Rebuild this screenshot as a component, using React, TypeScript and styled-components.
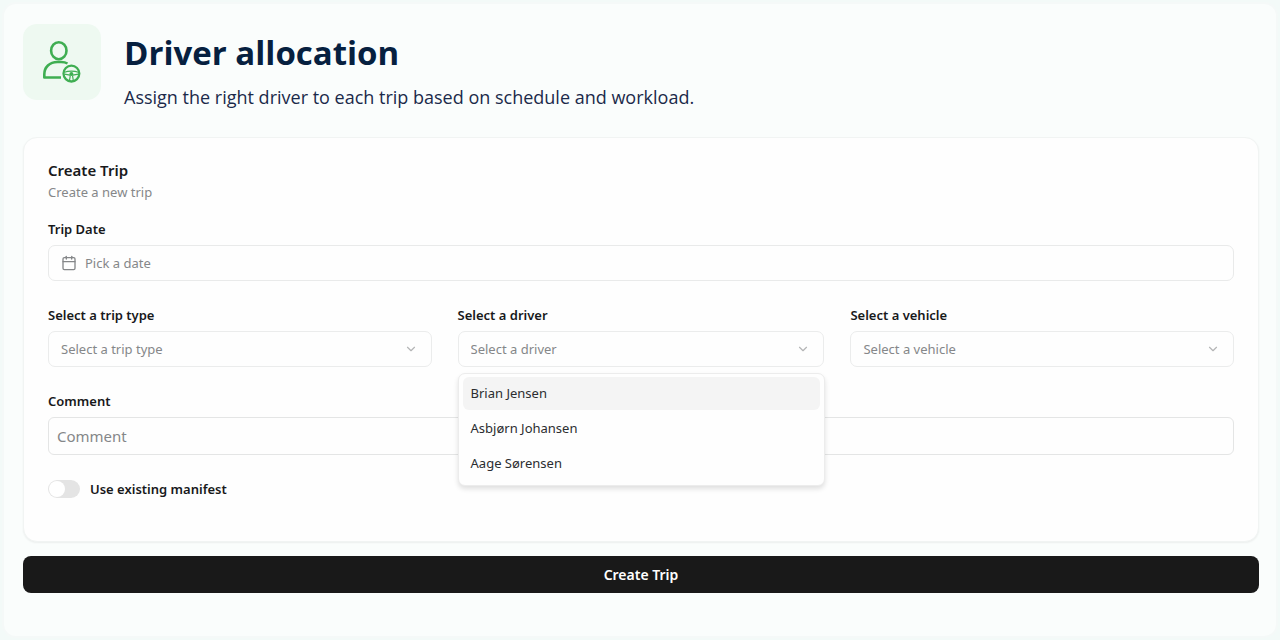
import React from "react";
import styled, { createGlobalStyle } from "styled-components";
import { Calendar, ChevronDown } from "lucide-react";

const GlobalStyle = createGlobalStyle`
  *, *::before, *::after { box-sizing: border-box; }
  body {
    margin: 0;
    background: #f3faf8;
    color: #18191b;
    font-family: "Noto Sans", "Open Sans", sans-serif;
    font-size: 13px;
    line-height: 20px;
  }
  button, input, select { font: inherit; }
`;

const Page = styled.main`
  min-height: 100vh;
  padding: 2px;
  display: flex;
`;

const Panel = styled.div`
  flex: 1;
  min-width: 0;
  padding: 20px 17px 40px 19px;
  border: 2px solid #f5f9f8;
  border-radius: 14px;
  background: #fafdfc;
`;

const Header = styled.header`
  display: flex;
  gap: 23px;
  margin-bottom: 28px;
  font-family: "Open Sans", "Noto Sans", sans-serif;
`;

const IconTile = styled.div`
  flex: none;
  display: grid;
  place-items: center;
  width: 78px;
  height: 76px;
  border-radius: 14px;
  background: #eef9f1;
`;

const Title = styled.h1`
  margin: 5px 0 8px;
  color: #06203f;
  font-size: 33px;
  font-weight: 700;
  line-height: 48px;
`;

const Subtitle = styled.p`
  margin: 0;
  color: #1b2a4a;
  font-size: 18px;
  line-height: 24px;
`;

const Card = styled.section`
  padding: 22px 24px 42px;
  border: 1px solid #f1f4f3;
  border-radius: 14px;
  background: #fefefe;
  box-shadow: 0 1px 2px rgba(0, 0, 0, 0.06);
`;

const CardTitle = styled.h2`
  margin: 0 0 2px;
  font-size: 15px;
  font-weight: 600;
  line-height: 20px;
`;

const CardText = styled.p`
  margin: 0 0 17px;
  color: #858789;
`;

const Fields = styled.div`
  display: flex;
  flex-direction: column;
  gap: 24px;
`;

const FieldRow = styled.div`
  display: grid;
  grid-template-columns: 23fr 22fr 23fr;
  gap: 26px;
`;

const Field = styled.div`
  position: relative;
  display: flex;
  flex-direction: column;
  gap: 6px;
  min-width: 0;
`;

const Label = styled.label`
  font-weight: 600;
`;

const DateButton = styled.button`
  display: flex;
  align-items: center;
  gap: 8px;
  height: 36px;
  padding: 0 12px;
  border: 1px solid #e9eaea;
  border-radius: 7px;
  background: #fefefe;
  color: #858789;
  text-align: left;
`;

const SelectBox = styled.div`
  display: grid;
  align-items: center;

  > * { grid-area: 1 / 1; }
  > svg {
    justify-self: end;
    margin-right: 14px;
    color: #b4b5b6;
    pointer-events: none;
  }
`;

const Select = styled.select`
  appearance: none;
  width: 100%;
  height: 36px;
  padding: 0 36px 0 12px;
  border: 1px solid #ebecec;
  border-radius: 7px;
  background: #fefefe;
  color: #858789;
`;

const Menu = styled.ul`
  position: absolute;
  z-index: 1;
  top: calc(100% + 6px);
  left: 0;
  right: -1px;
  margin: 0;
  padding: 3px 4px 5px;
  display: grid;
  gap: 2px;
  list-style: none;
  border: 1px solid #ececec;
  border-radius: 7px;
  background: #fefefe;
  box-shadow: 0 3px 5px rgba(0, 0, 0, 0.12);
`;

const MenuItem = styled.li<{ $active: boolean }>`
  padding: 6px 8px 7px;
  border-radius: 6px;
  background: ${(p) => (p.$active ? "#f4f4f4" : "transparent")};
  color: #2b2d30;
`;

const TextInput = styled.input`
  height: 38px;
  padding: 0 8px;
  border: 1px solid #e4e5e5;
  border-radius: 6px;
  background: #fefefe;
  font-size: 15px;
  &::placeholder { color: #858789; opacity: 1; }
`;

const SwitchRow = styled.div`
  display: flex;
  align-items: center;
  gap: 10px;
`;

const Switch = styled.input`
  appearance: none;
  display: flex;
  width: 32px;
  height: 18px;
  margin: 0;
  padding: 1px;
  border-radius: 9px;
  background: #e4e4e4;

  &::before {
    content: "";
    width: 16px;
    height: 16px;
    border-radius: 50%;
    background: #fff;
  }
  &:checked { background: #191919; justify-content: flex-end; }
`;

const SubmitButton = styled.button`
  display: block;
  width: 100%;
  height: 37px;
  margin-top: 14px;
  border: 0;
  border-radius: 8px;
  background: #191919;
  color: #fff;
  font-size: 14px;
  font-weight: 600;
`;

function DriverIcon() {
  return (
    <svg width="40" height="44" viewBox="0 0 40 44" fill="none" stroke="#3fae52" strokeWidth="2.6" aria-hidden="true">
      <ellipse cx="16.8" cy="10.7" rx="7.7" ry="8.5" />
      <path d="M25.5 23.5C23.500 22.300 21.500 22 19 22h-3.500C7.500 22 2.300 27.300 2.300 34.300v3.200H19" strokeLinejoin="round" />
      <circle cx="29.400" cy="33.600" r="7.900" strokeWidth="2.300" />
      <path d="M22.500 32.300C26 30.800 32.800 30.800 36.300 32.300M22.500 34.200L28 35.200M36.300 34.200L30.800 35.200M28.300 35.500L27.500 40.500M30.500 35.500L31.300 40.500" strokeWidth="1.200" />
      <circle cx="29.400" cy="34" r="2" fill="#3fae52" stroke="none" />
    </svg>
  );
}

const drivers = ["Brian Jensen", "Asbjørn Johansen", "Aage Sørensen"];

function SelectField({ id, label, options = [], open = false }: { id: string; label: string; options?: string[]; open?: boolean }) {
  return (
    <Field>
      <Label htmlFor={id}>{label}</Label>
      <SelectBox>
        <Select id={id} defaultValue="">
          <option value="">{label}</option>
          {options.map((name) => (
            <option key={name}>{name}</option>
          ))}
        </Select>
        <ChevronDown size={14} strokeWidth={2} />
      </SelectBox>
      {open && (
        <Menu role="listbox" aria-label={label}>
          {options.map((name, i) => (
            <MenuItem key={name} role="option" aria-selected={i === 0} $active={i === 0}>
              {name}
            </MenuItem>
          ))}
        </Menu>
      )}
    </Field>
  );
}

export default function App() {
  return (
    <Page>
      <GlobalStyle />
      <Panel>
        <Header>
          <IconTile>
            <DriverIcon />
          </IconTile>
          <div>
            <Title>Driver allocation</Title>
            <Subtitle>Assign the right driver to each trip based on schedule and workload.</Subtitle>
          </div>
        </Header>
        <form onSubmit={(e) => e.preventDefault()}>
          <Card>
            <CardTitle>Create Trip</CardTitle>
            <CardText>Create a new trip</CardText>
            <Fields>
              <Field>
                <Label htmlFor="trip-date">Trip Date</Label>
                <DateButton id="trip-date" type="button">
                  <Calendar size={16} strokeWidth={2} />
                  Pick a date
                </DateButton>
              </Field>
              <FieldRow>
                <SelectField id="trip-type" label="Select a trip type" />
                <SelectField id="driver" label="Select a driver" options={drivers} open />
                <SelectField id="vehicle" label="Select a vehicle" />
              </FieldRow>
              <Field>
                <Label htmlFor="comment">Comment</Label>
                <TextInput id="comment" type="text" placeholder="Comment" />
              </Field>
              <SwitchRow>
                <Switch id="manifest" type="checkbox" role="switch" />
                <Label htmlFor="manifest">Use existing manifest</Label>
              </SwitchRow>
            </Fields>
          </Card>
          <SubmitButton type="submit">Create Trip</SubmitButton>
        </form>
      </Panel>
    </Page>
  );
}
